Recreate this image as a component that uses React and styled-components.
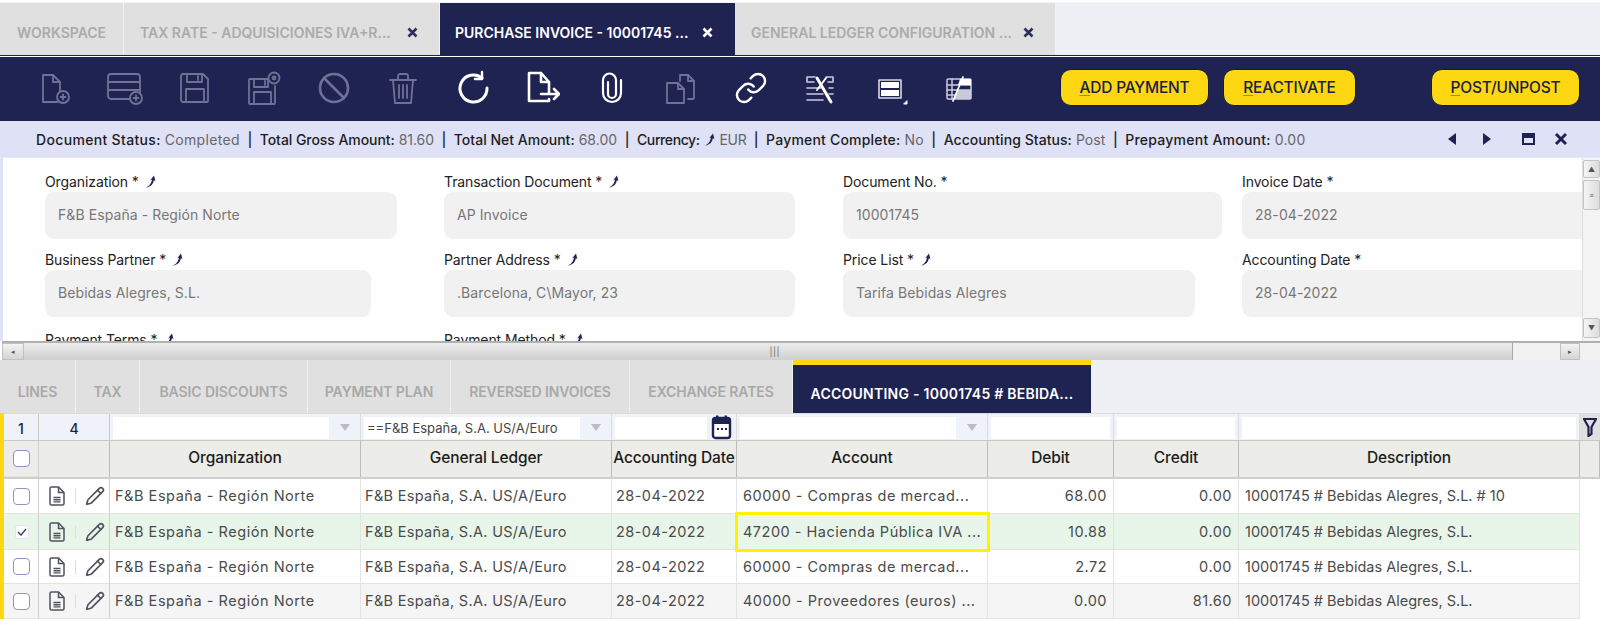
import React from 'react';
import styled, { createGlobalStyle } from 'styled-components';
import { Pencil, Link as LinkIcon } from 'lucide-react';

const NAVY = '#1f2352';
const FONT = 'Inter, "Noto Sans", sans-serif';

const Global = createGlobalStyle`
  html, body { margin: 0; padding: 0; background: #fff; }
  body { font-family: ${FONT}; width: 1600px; height: 619px; overflow: hidden; }
  * { box-sizing: border-box; }
`;

const Page = styled.div`display:flex;flex-direction:column;width:1600px;height:619px;overflow:hidden;padding-top:2px;`;

const TopTabs = styled.div`display:flex;height:54px;background:#eff0f5;border-top:1px solid #f4f4f8;border-bottom:1px solid ${NAVY};flex:none;`;
const TopTab = styled.div`
  width:${p => p.$w}px;display:flex;align-items:center;justify-content:space-between;padding:6px ${p => p.$pr || 17}px 0 ${p => p.$pl || 17}px;
  background:${p => p.$active ? NAVY : '#e0e0e0'};color:${p => p.$active ? '#fff' : '#ababab'};
  border-right:${p => p.$active ? 'none' : '1px solid #f2f2f2'};
  font-size:14px;font-weight:600;letter-spacing:0;white-space:nowrap;flex:none;
`;
const CloseGlyph = styled.svg`flex:none;color:${p => p.$active ? '#fff' : '#2b3060'};`;
const TabClose = ({ active }) => (
  <CloseGlyph $active={active} width="11" height="11" viewBox="0 0 11 11" fill="none" stroke="currentColor" strokeWidth="2.6"><path d="M1.500 1.500l8 8M9.500 1.500l-8 8" /></CloseGlyph>
);

const Toolbar = styled.div`display:flex;align-items:center;height:64px;margin-top:1px;background:${NAVY};padding:0 20px 0 21px;flex:none;`;
const IconSlot = styled.div`width:69.5px;height:36px;display:flex;justify-content:center;align-items:center;flex:none;margin-top:-2px;
  color:${p => p.$on ? '#fff' : '#6f7295'};`;
const ActionGroup = styled.div`display:flex;gap:14px;margin-left:${p => p.$ml || 0}px;`;
const Action = styled.div`
  width:${p => p.$w}px;height:37px;border-radius:11px;background:#fdd712;border:1px solid #14183f;margin-top:-3px;
  color:#1b1e45;font-size:15.5px;font-weight:500;letter-spacing:-.2px;display:flex;align-items:center;justify-content:center;
  u{text-decoration-color:#9a8f3c;text-underline-offset:2px;}
`;
const Grow = styled.div`flex:1;`;

const StatusBar = styled.div`height:37px;background:#dfe1f6;display:flex;align-items:center;padding:0 33px 0 36px;font-size:14px;flex:none;border-bottom:1px solid #e8e8f4;`;
const StatusText = styled.div`flex:1;color:#1d1d1d;font-weight:500;white-space:nowrap;display:flex;align-items:center;`;
const Segment = styled.span`display:inline-flex;align-items:center;letter-spacing:${p => p.$ls}px;`;
const StatusValue = styled.span`color:#666;font-weight:400;margin-left:4px;`;
const Sep = styled.span`margin:0 7.5px;color:#1d1d1d;`;
const SwooshGap = styled.span`width:4px;flex:none;`;
const StatusIcons = styled.div`display:flex;align-items:center;color:${NAVY};`;

const FormWrap = styled.div`height:183px;display:flex;border-left:3px solid #dfe1f6;flex:none;background:#fff;`;
const FormBody = styled.div`flex:1;overflow:hidden;padding:13px 0 0 42px;`;
const FormGrid = styled.div`display:grid;grid-template-columns:repeat(4,399px);row-gap:9.5px;width:1596px;`;
const Field = styled.div`display:flex;flex-direction:column;padding-top:${p => p.$pt || 0}px;`;
const FieldLabel = styled.div`height:21px;display:flex;align-items:center;gap:6px;font-size:14px;color:#222;letter-spacing:-.1px;white-space:nowrap;`;
const FieldInput = styled.div`width:${p => p.$w}px;height:47px;border-radius:9px;background:#f1f1f1;color:#777;font-size:14px;letter-spacing:.08px;display:flex;align-items:center;padding:0 0 2px 13px;white-space:nowrap;`;

const VBar = styled.div`width:18px;display:flex;flex-direction:column;padding-top:2px;border-left:1px solid #ddd;background:#f4f4f4;`;
const VBtn = styled.div`height:${p => p.$h}px;margin-bottom:${p => p.$mb || 0}px;background:linear-gradient(90deg,#f5f5f5,#dcdcdc);border:1px solid #c4c4c4;border-radius:2px;display:flex;align-items:center;justify-content:center;font-size:7px;color:#555;flex:none;`;
const HBar = styled.div`height:19px;display:flex;border-top:2px solid #b0b0b0;margin-left:2px;background:#f2f2f2;flex:none;`;
const HBtn = styled.div`width:${p => p.$w}px;margin-left:${p => p.$ml || 0}px;background:linear-gradient(#f4f4f4,#d4d4d4);border:1px solid #c0c0c0;display:flex;align-items:center;justify-content:center;font-size:7px;color:#555;flex:none;`;
const HThumb = styled.div`width:${p => p.$w}px;background:linear-gradient(#ececec,#cfcfcf);border-right:1px solid #aaa;display:flex;justify-content:flex-end;align-items:center;padding-right:${p => p.$pr}px;font-size:9px;color:#666;letter-spacing:.5px;flex:none;`;

const SubTabs = styled.div`display:flex;height:53px;background:#eff0f5;flex:none;`;
const SubTab = styled.div`
  width:${p => p.$w}px;display:flex;align-items:center;justify-content:center;flex:none;white-space:nowrap;
  background:${p => p.$active ? NAVY : '#e0e0e0'};color:${p => p.$active ? '#fff' : '#a9a9a9'};
  border-top:${p => p.$active ? '5px solid #fdd712' : 'none'};padding-top:${p => p.$active ? 8 : 10}px;
  border-right:${p => p.$active ? 'none' : '1px solid #efefef'};
  font-size:14px;font-weight:600;letter-spacing:${p => p.$active ? '.25px' : '-.1px'};
`;

const GridWrap = styled.div`flex:1;border-left:4px solid #fdd712;background:#fff;font-size:14.5px;color:#4b4b4b;`;
const COLS = '35px 71px 251px 251px 125px 251px 126px 125px 341px 20px';
const FilterRow = styled.div`display:grid;grid-template-columns:${COLS};height:28px;background:#eff3f9;border-top:1px solid #dcdcdc;border-bottom:1px solid #c9c9c9;`;
const FilterCount = styled.div`display:flex;align-items:center;justify-content:center;color:#1b1e45;font-size:14px;font-weight:500;border-right:1px solid #c9c9c9;padding-top:2px;`;
const FilterCell = styled.div`display:flex;align-items:center;padding:1px ${p => p.$pr || 3}px 0 3px;gap:4px;border-right:1px solid #dcdcdc;`;
const FilterInput = styled.div`flex:1;height:22px;background:#fff;color:#444;font-size:13px;padding-left:3px;display:flex;align-items:center;white-space:nowrap;overflow:hidden;`;
const DropArrow = styled.div`width:24px;flex:none;display:flex;justify-content:center;&::before{content:'';border:5px solid transparent;border-top:7px solid #b9bcc6;border-bottom:0;}`;
const FilterEnd = styled.div`background:#e0e0e0;display:flex;align-items:center;justify-content:center;`;
const HeaderRow = styled.div`display:grid;grid-template-columns:${COLS};height:38px;border-bottom:2px solid #cfcfcf;`;
const HeadCell = styled.div`background:#ecede8;border-right:1px solid #bcbcbc;display:flex;align-items:center;justify-content:center;padding-bottom:3px;color:#1c1c1c;font-size:15.5px;font-weight:500;letter-spacing:-.1px;white-space:nowrap;overflow:hidden;`;
const Row = styled.div`display:grid;grid-template-columns:${COLS};height:${p => p.$h || 35}px;background:${p => p.$bg || '#fff'};`;
const Cell = styled.div`
  display:flex;align-items:center;justify-content:${p => p.$right ? 'flex-end' : 'flex-start'};
  padding:0 ${p => p.$right ? 6 : 4}px 1px ${p => p.$pl || 4}px;border-right:1px solid #e3e3e3;border-bottom:1px solid #e3e3e3;white-space:nowrap;overflow:hidden;letter-spacing:${p => p.$ls || 0}px;
`;
const Mark = styled(Cell)`
  overflow:visible;position:relative;z-index:1;outline:3px solid #fff200;outline-offset:-1px;
`;
const CheckCell = styled.div`display:flex;align-items:center;justify-content:flex-start;padding-left:9px;border-right:1px solid #cfcfcf;border-bottom:1px solid #e3e3e3;background:${p => p.$head ? '#ecede8' : 'transparent'};`;
const Check = styled.div`width:17px;height:17px;border:1.5px solid #8f92c8;border-radius:4px;background:#fff;`;
const Checked = styled.div`width:14px;height:14px;margin-left:2px;border:1px solid #e4e4e4;border-radius:3px;background:#fff;display:flex;align-items:center;justify-content:center;`;
const ActionsCell = styled.div`display:flex;align-items:center;padding-left:10px;border-right:1px solid #cfcfcf;border-bottom:1px solid #e3e3e3;color:#50535f;`;
const ThinDivider = styled.div`width:1px;height:14px;background:#ddd;margin:0 9px 0 10px;`;
const BlankEnd = styled.div`background:#fff;`;

const S = { fill: 'none', stroke: 'currentColor', strokeLinecap: 'round', strokeLinejoin: 'round' };
const Ico = ({ w = 36, children, sw = 1.8 }) => <svg width={w} height={36} viewBox={`0 0 ${w} 36`} {...S} strokeWidth={sw}>{children}</svg>;
const Plus = ({ x, y }) => <><circle cx={x} cy={y} r="6" /><path d={`M${x - 2.5} ${y}h5M${x} ${y - 2.5}v5`} /></>;

const toolIcons = [
  <Ico><path d="M22 21V12l-7-7H5v27h15" /><path d="M15 5v7h7" /><Plus x={25} y={27} /></Ico>,
  <Ico><rect x="1" y="4" width="32" height="25" rx="3" /><path d="M1 12h32M1 20h32" /><circle cx="29" cy="28" r="6" fill={NAVY} /><path d="M26.500 28h5M29 25.500v5" /></Ico>,
  <Ico><path d="M6 4h20l5 5v22a1 1 0 0 1-1 1H6a2 2 0 0 1-2-2V6a2 2 0 0 1 2-2z" /><path d="M10 4v8h15V4M21 6v4M9 32V19h18v13M9 19h18" /></Ico>,
  <Ico w={38}><path d="M28 9H5a1 1 0 0 0-1 1v23a1 1 0 0 0 1 1h24a1 1 0 0 0 1-1V16" /><path d="M9 9v8h14V9M20 11v4M9 34V22h17v12" /><circle cx="29" cy="8" r="5.500" fill={NAVY} /><circle cx="29" cy="8" r="1.500" /></Ico>,
  <Ico sw={2.6}><circle cx="18" cy="18" r="14" /><path d="M8 8l20 20" /></Ico>,
  <Ico><path d="M5 10h26M13 10V6a2 2 0 0 1 2-2h6a2 2 0 0 1 2 2v4M8 10l2 23h16l2-23M14 15v13M18 15v13M22 15v13" /></Ico>,
  <Ico sw={3}><path d="M27 8a13.500 13.500 0 1 0 5 10" /><path d="M27 2v7h-7" strokeWidth="2.400" /></Ico>,
  <Ico sw={2.6}><path d="M25 23V12l-8-9H5v28h20v-2" /><path d="M17 3v9h8M17 24h17M30 19l5 5-5 5" /></Ico>,
  <Ico sw={2.2}><path d="M27 10v13a9 9 0 0 1-18 0V10a6.500 6.500 0 0 1 13 0v14a4 4 0 0 1-8 0V12" /></Ico>,
  <Ico><path d="M17 11V5h8l6 6v17a1 1 0 0 1-1 1h-5" /><path d="M25 5v6h6" /><path d="M4 13h11l6 6v14H4z" /><path d="M15 13v6h6" /></Ico>,
  <LinkIcon size={34} strokeWidth={1.7} />,
  <Ico sw={1.6}><g stroke="#c9cbdc"><path d="M5 12V7h8M5 12h7M24 7h7v5h-5M5 18h14M5 24h16M5 30h16M27 18h4M27 24h4" /></g><path d="M15 8l14 24" strokeWidth="3" stroke="#fff" /><path d="M24 8L15 20" strokeWidth="2" stroke="#fff" /></Ico>,
  <Ico sw={1.6}><rect x="7" y="10" width="22" height="18" stroke="#d8d9e4" /><rect x="9" y="12" width="18" height="6" fill="#fff" stroke="none" /><rect x="9" y="20" width="18" height="6" fill="#fff" stroke="none" /><path d="M32 34h3v-3z" fill="#fff" stroke="#fff" strokeWidth="1" /></Ico>,
  <Ico sw={1.5}><rect x="6" y="9" width="24" height="20" rx="1" stroke="#c9cbdc" /><path d="M6 15h24M6 20h24M6 25h24M11 9v20" stroke="#c9cbdc" /><path d="M19 9h11v6H17z" fill="#fff" stroke="none" /><path d="M16 20h14v9H13z" fill="#c9cbdc" stroke="none" /><path d="M22 7L12 31" stroke="#fff" strokeWidth="1.800" /></Ico>,
];
const active = [6, 7, 8, 10, 11, 12, 13];

const Swoosh = () => (
  <svg width="12" height="13" viewBox="0 0 12 13"><path d="M1 12.500C5 11 6.500 7.500 7 4.500L5 5.500 9 .5l1.500 6-1.600-1.500C8.500 8.500 6 12 1 12.500z" fill={NAVY} /></svg>
);
const DocIcon = () => (
  <svg width="16" height="20" viewBox="0 0 16 20" fill="none" stroke="currentColor" strokeWidth="1.500"><path d="M2.500 1h7L15 6.500v11a1.500 1.500 0 0 1-1.500 1.500h-11A1.500 1.500 0 0 1 1 17.500v-15A1.500 1.500 0 0 1 2.500 1z" /><path d="M9.500 1v5.500H15" /><path d="M4.500 11.500h7M4.500 13.700h7M4.500 15.900h7" strokeWidth="1.400" /></svg>
);
const Tick = () => <svg width="10" height="8" viewBox="0 0 10 8" fill="none" stroke="#3b3f66" strokeWidth="1.400"><path d="M1 4l3 3 5-6" /></svg>;
const CalSvg = styled.svg`flex:none;`;
const Cal = () => (
  <CalSvg width="22" height="25" viewBox="0 0 22 25"><rect x="2" y="3" width="17" height="20" rx="2.500" fill="#fff" stroke={NAVY} strokeWidth="2.400" /><rect x="2" y="3" width="17" height="6" fill={NAVY} /><rect x="5" y="0.500" width="2.500" height="4" fill={NAVY} /><rect x="13.500" y="0.500" width="2.500" height="4" fill={NAVY} /><path d="M6 14h2M10 14h2M14 14h2" stroke={NAVY} strokeWidth="1.800" /></CalSvg>
);
const FunnelIco = () => <svg width="14" height="20" viewBox="0 0 14 20" fill="none" stroke={NAVY} strokeWidth="2.200"><path d="M1 2h12L8.500 10v7L5.500 19v-9z" /></svg>;

const fields = [
  ['Organization *', 'F&B España - Región Norte', 352, 1], ['Transaction Document *', 'AP Invoice', 351, 1], ['Document No. *', '10001745', 379, 0], ['Invoice Date *', '28-04-2022', 399, 0],
  ['Business Partner *', 'Bebidas Alegres, S.L.', 326, 1], ['Partner Address *', '.Barcelona, C\\Mayor, 23', 351, 1], ['Price List *', 'Tarifa Bebidas Alegres', 352, 1], ['Accounting Date *', '28-04-2022', 399, 0],
];
const status = [
  ['Document Status:', 'Completed', 0, .33], ['Total Gross Amount:', '81.60', 0, -.06], ['Total Net Amount:', '68.00', 0, .02], ['Currency:', 'EUR', 1, -.4], ['Payment Complete:', 'No', 0, .2], ['Accounting Status:', 'Post', 0, .06], ['Prepayment Amount:', '0.00', 0, .24],
];
const subTabs = [['LINES', 76], ['TAX', 64], ['BASIC DISCOUNTS', 168], ['PAYMENT PLAN', 143], ['REVERSED INVOICES', 179], ['EXCHANGE RATES', 163]];
const rows = [
  { acc: '60000 - Compras de mercad...', d: '68.00', c: '0.00', desc: '10001745 # Bebidas Alegres, S.L. # 10', h: 35 },
  { acc: '47200 - Hacienda Pública IVA ...', d: '10.88', c: '0.00', desc: '10001745 # Bebidas Alegres, S.L.', bg: '#e8f5e9', on: 1, h: 36 },
  { acc: '60000 - Compras de mercad...', d: '2.72', c: '0.00', desc: '10001745 # Bebidas Alegres, S.L.', h: 34 },
  { acc: '40000 - Proveedores (euros) ...', d: '0.00', c: '81.60', desc: '10001745 # Bebidas Alegres, S.L.', bg: '#f5f5f5', h: 35 },
];

export default function App() {
  return (
    <Page>
      <Global />
      <TopTabs>
        <TopTab $w={124}>WORKSPACE</TopTab>
        <TopTab $w={316} $pr={21} $pl={16}>TAX RATE - ADQUISICIONES IVA+R... <TabClose /></TopTab>
        <TopTab $w={295} $active $pr={22} $pl={15}>PURCHASE INVOICE - 10001745 ... <TabClose active /></TopTab>
        <TopTab $w={321} $pr={21} $pl={16}>GENERAL LEDGER CONFIGURATION ... <TabClose /></TopTab>
      </TopTabs>
      <Toolbar>
        {toolIcons.map((ic, i) => <IconSlot key={i} $on={active.includes(i)}>{ic}</IconSlot>)}
        <ActionGroup $ml={66}>
          <Action $w={149}><span><u>A</u>DD PAYMENT</span></Action>
          <Action $w={133}><span><u>R</u>EACTIVATE</span></Action>
        </ActionGroup>
        <Grow />
        <Action $w={149}><span><u>P</u>OST/UNPOST</span></Action>
      </Toolbar>
      <StatusBar>
        <StatusText>
          {status.map(([k, v, sw, ls], i) => (
            <React.Fragment key={k}>
              {i > 0 && <Sep>|</Sep>}
              <Segment $ls={ls}>{k}{sw ? <><SwooshGap /><Swoosh /></> : null}<StatusValue>{v}</StatusValue></Segment>
            </React.Fragment>
          ))}
        </StatusText>
        <StatusIcons>
          <svg width="120" height="16" viewBox="0 0 120 16" fill={NAVY}><path d="M9 2v12L1 8zM36 2l8 6-8 6zM75 2h13v12H75z" /><path d="M77 7h9v5h-9z" fill="#dfe1f6" /><path d="M109 3l10 10M119 3l-10 10" stroke={NAVY} strokeWidth="3" /></svg>
        </StatusIcons>
      </StatusBar>
      <FormWrap>
        <FormBody>
          <FormGrid>
            {fields.map(([l, v, w, sw]) => (
              <Field key={l}>
                <FieldLabel>{l}{sw ? <Swoosh /> : null}</FieldLabel>
                <FieldInput $w={w}>{v}</FieldInput>
              </Field>
            ))}
            <Field $pt={3}><FieldLabel>Payment Terms *<Swoosh /></FieldLabel></Field>
            <Field $pt={3}><FieldLabel>Payment Method *<Swoosh /></FieldLabel></Field>
          </FormGrid>
        </FormBody>
        <VBar>
          <VBtn $h={18} $mb={2}>▲</VBtn>
          <VBtn $h={30} $mb={108}>≡</VBtn>
          <VBtn $h={20}>▼</VBtn>
        </VBar>
      </FormWrap>
      <HBar>
        <HBtn $w={22}>◂</HBtn>
        <HThumb $w={1489} $pr={732}>|||</HThumb>
        <HBtn $w={20} $ml={47}>▸</HBtn>
      </HBar>
      <SubTabs>
        {subTabs.map(([t, w]) => <SubTab key={t} $w={w}>{t}</SubTab>)}
        <SubTab $w={298} $active>ACCOUNTING - 10001745 # BEBIDA...</SubTab>
      </SubTabs>
      <GridWrap>
        <FilterRow>
          <FilterCount>1</FilterCount>
          <FilterCount>4</FilterCount>
          <FilterCell $pr={0}><FilterInput /><DropArrow /></FilterCell>
          <FilterCell $pr={0}><FilterInput>==F&amp;B España, S.A. US/A/Euro</FilterInput><DropArrow /></FilterCell>
          <FilterCell><FilterInput /><Cal /></FilterCell>
          <FilterCell $pr={0}><FilterInput /><DropArrow /></FilterCell>
          <FilterCell><FilterInput /></FilterCell>
          <FilterCell><FilterInput /></FilterCell>
          <FilterCell><FilterInput /></FilterCell>
          <FilterEnd><FunnelIco /></FilterEnd>
        </FilterRow>
        <HeaderRow>
          <CheckCell $head><Check /></CheckCell>
          <HeadCell />
          <HeadCell>Organization</HeadCell>
          <HeadCell>General Ledger</HeadCell>
          <HeadCell>Accounting Date</HeadCell>
          <HeadCell>Account</HeadCell>
          <HeadCell>Debit</HeadCell>
          <HeadCell>Credit</HeadCell>
          <HeadCell>Description</HeadCell>
          <HeadCell />
        </HeaderRow>
        {rows.map((r, i) => {
          const AccCell = r.on ? Mark : Cell;
          return (
            <Row key={i} $bg={r.bg} $h={r.h}>
              <CheckCell>{r.on ? <Checked><Tick /></Checked> : <Check />}</CheckCell>
              <ActionsCell><DocIcon /><ThinDivider /><Pencil size={20} strokeWidth={2} /></ActionsCell>
              <Cell $ls={.54} $pl={5}>F&amp;B España - Región Norte</Cell>
              <Cell $ls={.32}>F&amp;B España, S.A. US/A/Euro</Cell>
              <Cell $ls={.45}>28-04-2022</Cell>
              <AccCell $ls={.5} $pl={6}>{r.acc}</AccCell>
              <Cell $right $ls={.5}>{r.d}</Cell>
              <Cell $right $ls={.5}>{r.c}</Cell>
              <Cell $pl={6}>{r.desc}</Cell>
              <BlankEnd />
            </Row>
          );
        })}
      </GridWrap>
    </Page>
  );
}
